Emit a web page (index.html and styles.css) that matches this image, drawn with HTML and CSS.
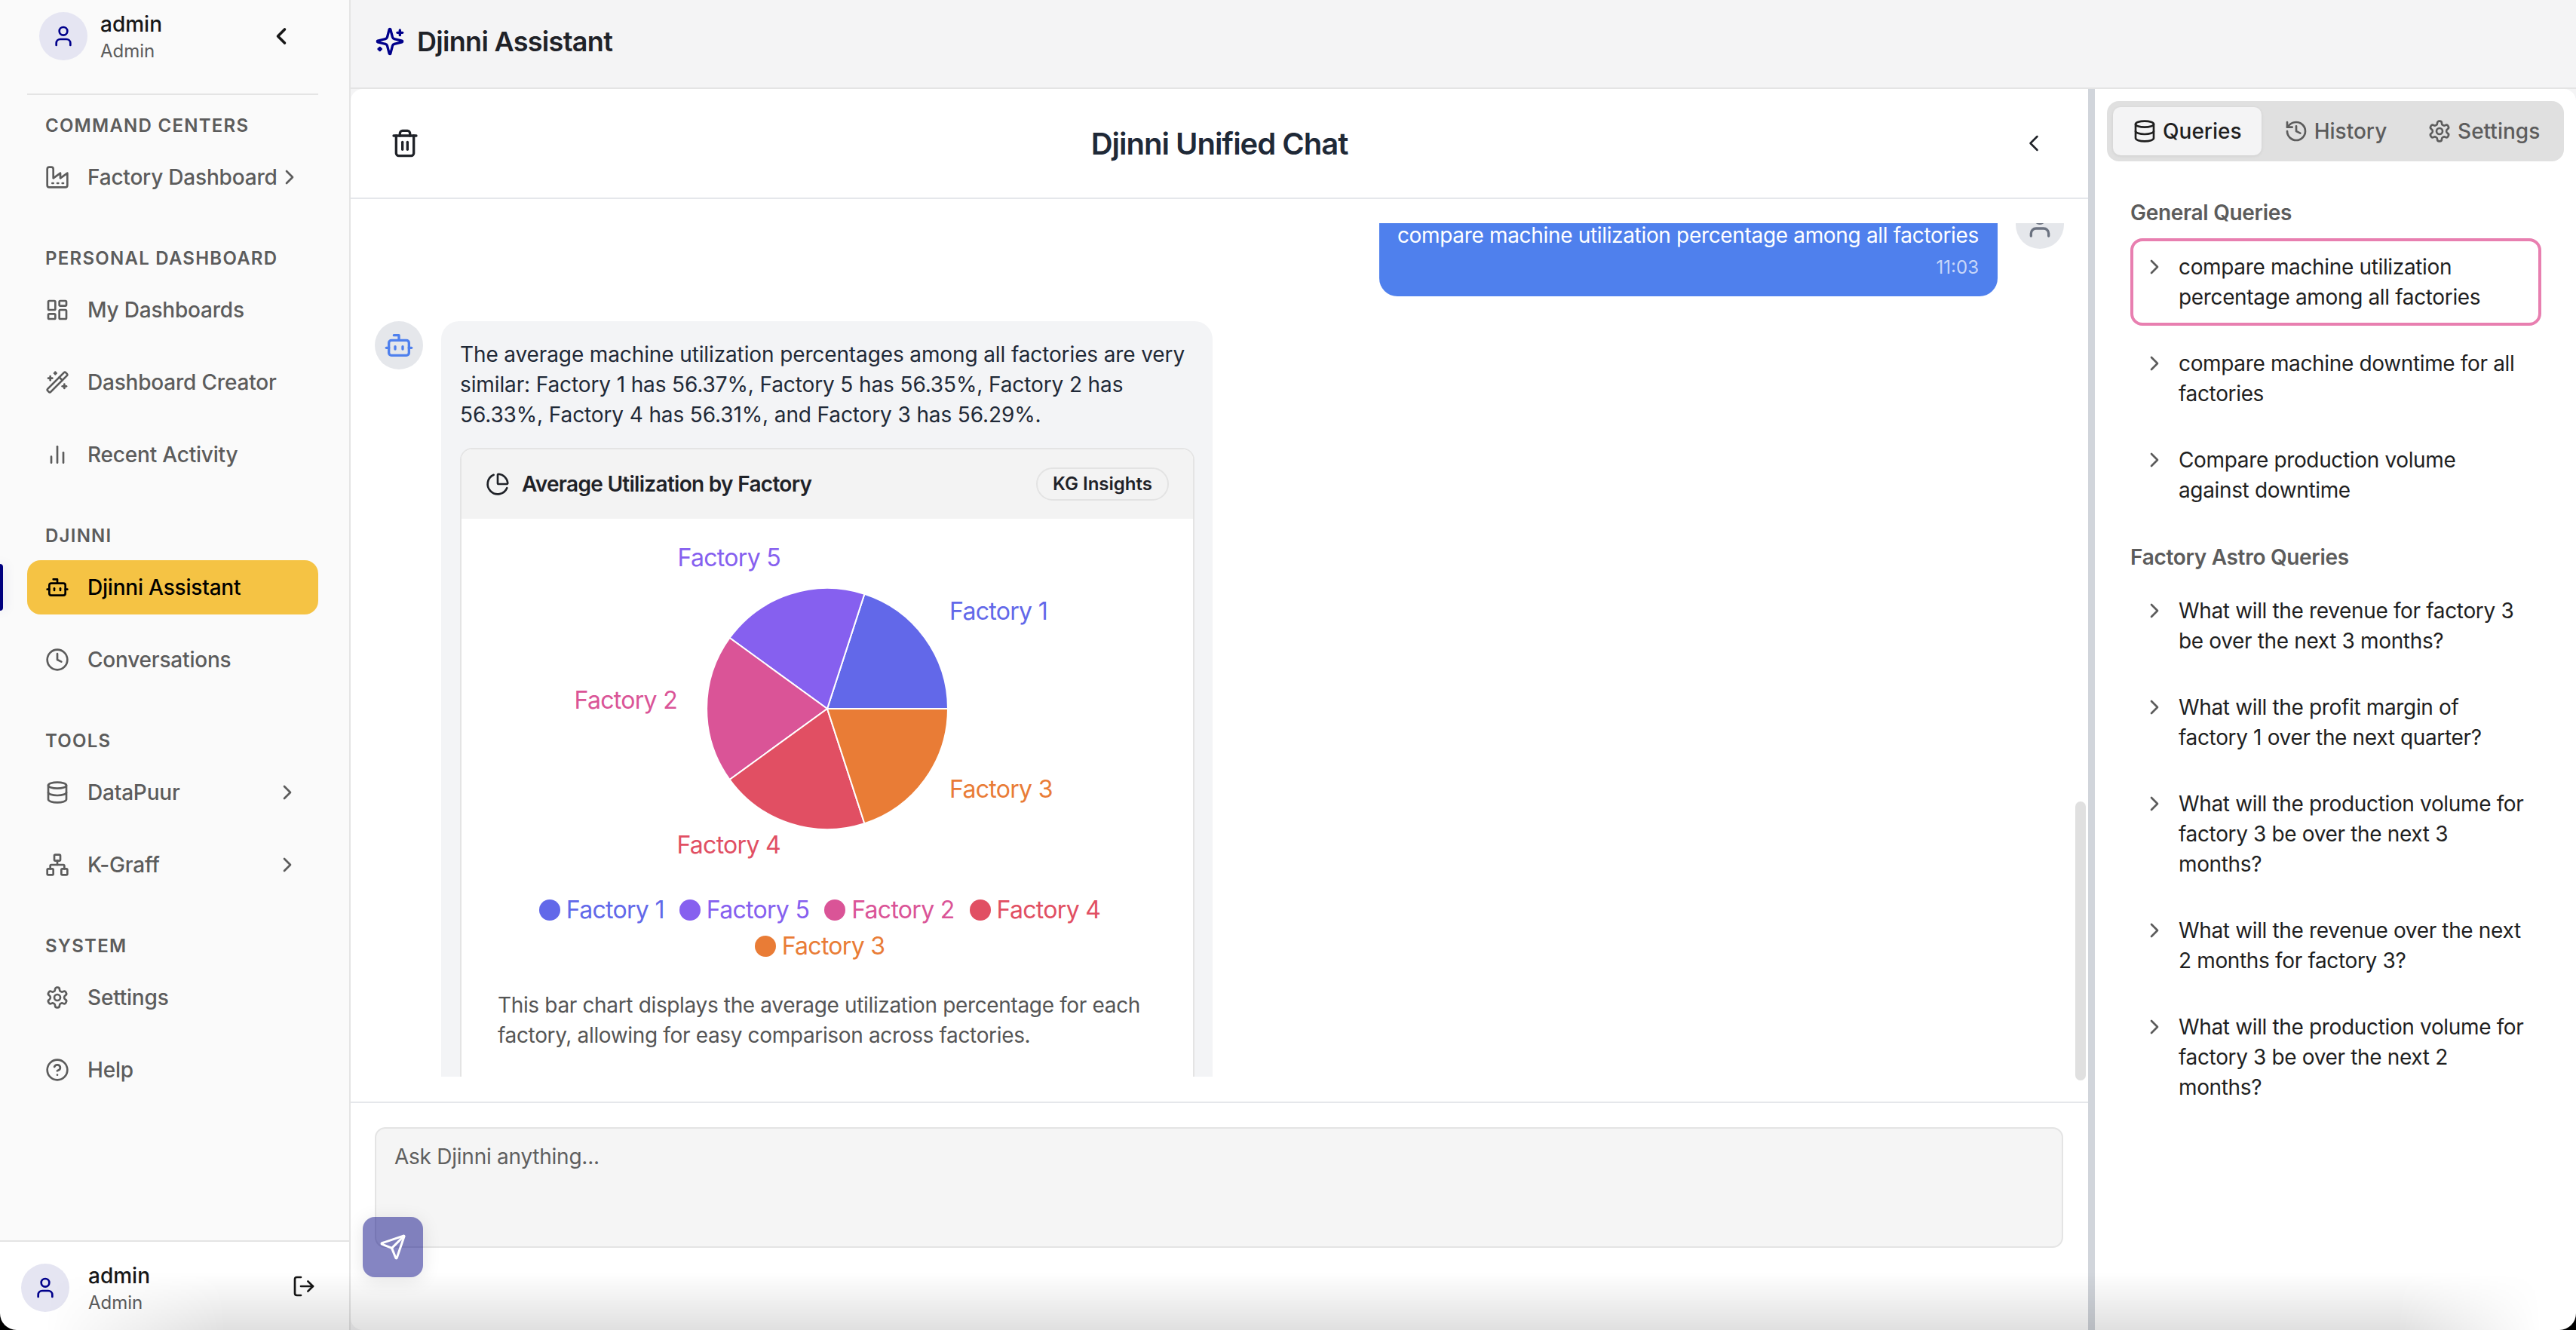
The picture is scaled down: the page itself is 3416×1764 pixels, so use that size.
FILE: index.html
```html
<!DOCTYPE html>
<html lang="en">
<head>
    <meta charset="UTF-8">
    <meta name="viewport" content="width=device-width, initial-scale=1.0">
    <title>Djinni Assistant</title>
    <link rel="stylesheet" href="styles.css">
</head>
<body>
    <!-- icon sprite -->
    <svg class="sprite" xmlns="http://www.w3.org/2000/svg">
        <symbol id="i-user" viewBox="0 0 24 24"><path d="M19 21v-2a4 4 0 0 0-4-4H9a4 4 0 0 0-4 4v2"/><circle cx="12" cy="7" r="4"/></symbol>
        <symbol id="i-left" viewBox="0 0 24 24"><path d="m15 18-6-6 6-6"/></symbol>
        <symbol id="i-right" viewBox="0 0 24 24"><path d="m9 18 6-6-6-6"/></symbol>
        <symbol id="i-factory" viewBox="0 0 24 24"><path d="M2 20a2 2 0 0 0 2 2h16a2 2 0 0 0 2-2V8l-7 5V8l-7 5V4a2 2 0 0 0-2-2H4a2 2 0 0 0-2 2Z"/><path d="M17 18h1"/><path d="M12 18h1"/><path d="M7 18h1"/></symbol>
        <symbol id="i-layout" viewBox="0 0 24 24"><rect width="7" height="9" x="3" y="3" rx="1"/><rect width="7" height="5" x="14" y="3" rx="1"/><rect width="7" height="9" x="14" y="12" rx="1"/><rect width="7" height="5" x="3" y="16" rx="1"/></symbol>
        <symbol id="i-wand" viewBox="0 0 24 24"><path d="m21.64 3.64-1.28-1.28a1.21 1.21 0 0 0-1.72 0L2.36 18.64a1.21 1.21 0 0 0 0 1.72l1.28 1.28a1.2 1.2 0 0 0 1.72 0L21.64 5.36a1.2 1.2 0 0 0 0-1.72"/><path d="m14 7 3 3"/><path d="M5 6v4"/><path d="M19 14v4"/><path d="M10 2v2"/><path d="M7 8H3"/><path d="M21 16h-4"/><path d="M11 3H9"/></symbol>
        <symbol id="i-bars" viewBox="0 0 24 24"><line x1="18" x2="18" y1="20" y2="10"/><line x1="12" x2="12" y1="20" y2="4"/><line x1="6" x2="6" y1="20" y2="14"/></symbol>
        <symbol id="i-bot" viewBox="0 0 24 24"><path d="M12 8V4H8"/><rect width="16" height="12" x="4" y="8" rx="2"/><path d="M2 14h2"/><path d="M20 14h2"/><path d="M15 13v2"/><path d="M9 13v2"/></symbol>
        <symbol id="i-clock" viewBox="0 0 24 24"><circle cx="12" cy="12" r="10"/><polyline points="12 6 12 12 16 14"/></symbol>
        <symbol id="i-database" viewBox="0 0 24 24"><ellipse cx="12" cy="5" rx="9" ry="3"/><path d="M3 5V19A9 3 0 0 0 21 19V5"/><path d="M3 12A9 3 0 0 0 21 12"/></symbol>
        <symbol id="i-network" viewBox="0 0 24 24"><rect x="16" y="16" width="6" height="6" rx="1"/><rect x="2" y="16" width="6" height="6" rx="1"/><rect x="9" y="2" width="6" height="6" rx="1"/><path d="M5 16v-3a1 1 0 0 1 1-1h12a1 1 0 0 1 1 1v3"/><path d="M12 12V8"/></symbol>
        <symbol id="i-settings" viewBox="0 0 24 24"><path d="M12.22 2h-.44a2 2 0 0 0-2 2v.18a2 2 0 0 1-1 1.73l-.43.25a2 2 0 0 1-2 0l-.15-.08a2 2 0 0 0-2.73.73l-.22.38a2 2 0 0 0 .73 2.73l.15.1a2 2 0 0 1 1 1.72v.51a2 2 0 0 1-1 1.74l-.15.09a2 2 0 0 0-.73 2.73l.22.38a2 2 0 0 0 2.73.73l.15-.08a2 2 0 0 1 2 0l.43.25a2 2 0 0 1 1 1.73V20a2 2 0 0 0 2 2h.44a2 2 0 0 0 2-2v-.18a2 2 0 0 1 1-1.73l.43-.25a2 2 0 0 1 2 0l.15.08a2 2 0 0 0 2.73-.73l.22-.39a2 2 0 0 0-.73-2.73l-.15-.08a2 2 0 0 1-1-1.74v-.5a2 2 0 0 1 1-1.74l.15-.09a2 2 0 0 0 .73-2.73l-.22-.38a2 2 0 0 0-2.73-.73l-.15.08a2 2 0 0 1-2 0l-.43-.25a2 2 0 0 1-1-1.73V4a2 2 0 0 0-2-2z"/><circle cx="12" cy="12" r="3"/></symbol>
        <symbol id="i-help" viewBox="0 0 24 24"><circle cx="12" cy="12" r="10"/><path d="M9.09 9a3 3 0 0 1 5.83 1c0 2-3 3-3 3"/><path d="M12 17h.01"/></symbol>
        <symbol id="i-logout" viewBox="0 0 24 24"><path d="M9 21H5a2 2 0 0 1-2-2V5a2 2 0 0 1 2-2h4"/><polyline points="16 17 21 12 16 7"/><line x1="21" x2="9" y1="12" y2="12"/></symbol>
        <symbol id="i-sparkles" viewBox="0 0 24 24"><path d="M9.937 15.5A2 2 0 0 0 8.5 14.063l-6.135-1.582a.5.5 0 0 1 0-.962L8.5 9.936A2 2 0 0 0 9.937 8.5l1.582-6.135a.5.5 0 0 1 .963 0L14.063 8.5A2 2 0 0 0 15.5 9.937l6.135 1.581a.5.5 0 0 1 0 .964L15.5 14.063a2 2 0 0 0-1.437 1.437l-1.582 6.135a.5.5 0 0 1-.963 0z"/><path d="M20 3v4"/><path d="M22 5h-4"/><path d="M4 17v2"/><path d="M5 18H3"/></symbol>
        <symbol id="i-trash" viewBox="0 0 24 24"><path d="M3 6h18"/><path d="M19 6v14c0 1-1 2-2 2H7c-1 0-2-1-2-2V6"/><path d="M8 6V4c0-1 1-2 2-2h4c1 0 2 1 2 2v2"/><line x1="10" x2="10" y1="11" y2="17"/><line x1="14" x2="14" y1="11" y2="17"/></symbol>
        <symbol id="i-pie" viewBox="0 0 24 24"><path d="M21 12c.552 0 1.005-.449.95-.998a10 10 0 0 0-8.953-8.951c-.55-.055-.998.398-.998.95v8a1 1 0 0 0 1 1z"/><path d="M21.21 15.89A10 10 0 1 1 8 2.83"/></symbol>
        <symbol id="i-history" viewBox="0 0 24 24"><path d="M3 12a9 9 0 1 0 9-9 9.75 9.75 0 0 0-6.74 2.74L3 8"/><path d="M3 3v5h5"/><path d="M12 7v5l4 2"/></symbol>
        <symbol id="i-send" viewBox="0 0 24 24"><path d="M14.536 21.686a.5.5 0 0 0 .937-.024l6.5-19a.496.496 0 0 0-.635-.635l-19 6.5a.5.5 0 0 0-.024.937l7.93 3.18a2 2 0 0 1 1.112 1.11z"/><path d="m21.854 2.147-10.94 10.939"/></symbol>
    </svg>

    <div class="app">
        <!-- Sidebar -->
        <aside class="sidebar">
            <div class="side-top">
                <div class="user-chip">
                    <span class="avatar"><svg class="icon"><use href="#i-user"/></svg></span>
                    <div class="user-text"><div class="user-name">admin</div><div class="user-role">Admin</div></div>
                    <svg class="icon icon-collapse"><use href="#i-left"/></svg>
                </div>
            </div>

            <nav class="nav">
                <div class="nav-section">
                    <div class="nav-title">COMMAND CENTERS</div>
                    <a class="nav-item"><svg class="icon"><use href="#i-factory"/></svg><span class="nav-label">Factory Dashboard</span><svg class="icon"><use href="#i-right"/></svg></a>
                </div>
                <div class="nav-section">
                    <div class="nav-title">PERSONAL DASHBOARD</div>
                    <a class="nav-item"><svg class="icon"><use href="#i-layout"/></svg><span class="nav-label">My Dashboards</span></a>
                    <a class="nav-item"><svg class="icon"><use href="#i-wand"/></svg><span class="nav-label">Dashboard Creator</span></a>
                    <a class="nav-item"><svg class="icon"><use href="#i-bars"/></svg><span class="nav-label">Recent Activity</span></a>
                </div>
                <div class="nav-section">
                    <div class="nav-title">DJINNI</div>
                    <a class="nav-item active"><svg class="icon"><use href="#i-bot"/></svg><span class="nav-label">Djinni Assistant</span></a>
                    <a class="nav-item"><svg class="icon"><use href="#i-clock"/></svg><span class="nav-label">Conversations</span></a>
                </div>
                <div class="nav-section">
                    <div class="nav-title">TOOLS</div>
                    <a class="nav-item"><svg class="icon"><use href="#i-database"/></svg><span class="nav-label">DataPuur</span><svg class="icon"><use href="#i-right"/></svg></a>
                    <a class="nav-item"><svg class="icon"><use href="#i-network"/></svg><span class="nav-label">K-Graff</span><svg class="icon"><use href="#i-right"/></svg></a>
                </div>
                <div class="nav-section">
                    <div class="nav-title">SYSTEM</div>
                    <a class="nav-item"><svg class="icon"><use href="#i-settings"/></svg><span class="nav-label">Settings</span></a>
                    <a class="nav-item"><svg class="icon"><use href="#i-help"/></svg><span class="nav-label">Help</span></a>
                </div>
            </nav>

            <div class="side-bottom">
                <div class="user-chip">
                    <span class="avatar"><svg class="icon"><use href="#i-user"/></svg></span>
                    <div class="user-text"><div class="user-name">admin</div><div class="user-role">Admin</div></div>
                    <svg class="icon icon-logout"><use href="#i-logout"/></svg>
                </div>
            </div>
        </aside>

        <main class="main">
            <header class="topbar">
                <svg class="icon icon-spark"><use href="#i-sparkles"/></svg>
                <h1 class="topbar-title">Djinni Assistant</h1>
            </header>

            <div class="content">
                <!-- Chat -->
                <section class="chat">
                    <div class="chat-head">
                        <button class="icon-btn"><svg class="icon icon-40"><use href="#i-trash"/></svg></button>
                        <h2 class="chat-title">Djinni Unified Chat</h2>
                        <button class="icon-btn"><svg class="icon icon-36 thin"><use href="#i-left"/></svg></button>
                    </div>

                    <div class="messages">
                        <div class="msg msg-user">
                            <div class="bubble-user">
                                <div class="user-text-line">compare machine utilization percentage among all factories</div>
                                <div class="msg-time">11:03</div>
                            </div>
                            <span class="msg-avatar user"><svg class="icon icon-40"><use href="#i-user"/></svg></span>
                        </div>

                        <div class="msg">
                            <span class="msg-avatar bot"><svg class="icon icon-40"><use href="#i-bot"/></svg></span>
                            <div class="bubble-bot">
                                <p class="bot-text">The average machine utilization percentages among all factories are very similar: Factory 1 has 56.37%, Factory 5 has 56.35%, Factory 2 has 56.33%, Factory 4 has 56.31%, and Factory 3 has 56.29%.</p>
                                <div class="chart-card">
                                    <div class="chart-head">
                                        <svg class="icon"><use href="#i-pie"/></svg>
                                        <span class="chart-title">Average Utilization by Factory</span>
                                        <span class="badge">KG Insights</span>
                                    </div>
                                    <div class="chart-body">
                                        <svg class="pie" viewBox="0 0 970 495" width="970" height="495">
                                            <g transform="translate(485 252)" stroke="#fff" stroke-width="2">
                                                <path fill="#6268e9" d="M0 0L160 0A160 160 0 0 0 49.4 -152.2Z"/>
                                                <path fill="#8660ef" d="M0 0L49.4 -152.2A160 160 0 0 0 -129.4 -94Z"/>
                                                <path fill="#da5497" d="M0 0L-129.4 -94A160 160 0 0 0 -129.4 94Z"/>
                                                <path fill="#e14f63" d="M0 0L-129.4 94A160 160 0 0 0 49.4 152.2Z"/>
                                                <path fill="#e97c36" d="M0 0L49.4 152.2A160 160 0 0 0 160 0Z"/>
                                            </g>
                                            <text class="pie-label f1" x="647" y="122">Factory 1</text>
                                            <text class="pie-label f5" x="423" y="51" text-anchor="end">Factory 5</text>
                                            <text class="pie-label f2" x="286" y="240" text-anchor="end">Factory 2</text>
                                            <text class="pie-label f4" x="423" y="432" text-anchor="end">Factory 4</text>
                                            <text class="pie-label f3" x="647" y="358">Factory 3</text>
                                        </svg>
                                        <ul class="legend">
                                            <li class="f1"><span class="dot"></span>Factory 1</li>
                                            <li class="f5"><span class="dot"></span>Factory 5</li>
                                            <li class="f2"><span class="dot"></span>Factory 2</li>
                                            <li class="f4"><span class="dot"></span>Factory 4</li>
                                            <li class="f3"><span class="dot"></span>Factory 3</li>
                                        </ul>
                                        <p class="chart-desc">This bar chart displays the average utilization percentage for each factory, allowing for easy comparison across factories.</p>
                                    </div>
                                </div>
                            </div>
                        </div>
                    </div>
                    <div class="scroll-thumb"></div>

                    <div class="composer">
                        <div class="composer-box">Ask Djinni anything...</div>
                        <button class="send-btn"><svg class="icon icon-36"><use href="#i-send"/></svg></button>
                    </div>
                </section>

                <div class="split"></div>

                <!-- Right panel -->
                <section class="panel">
                    <div class="tabs">
                        <div class="tab active"><svg class="icon"><use href="#i-database"/></svg>Queries</div>
                        <div class="tab"><svg class="icon"><use href="#i-history"/></svg>History</div>
                        <div class="tab"><svg class="icon"><use href="#i-settings"/></svg>Settings</div>
                    </div>

                    <h3 class="query-title">General Queries</h3>
                    <div class="query-list">
                        <div class="query selected"><svg class="icon"><use href="#i-right"/></svg><span>compare machine utilization percentage among all factories</span></div>
                        <div class="query"><svg class="icon"><use href="#i-right"/></svg><span>compare machine downtime for all factories</span></div>
                        <div class="query"><svg class="icon"><use href="#i-right"/></svg><span>Compare production volume against downtime</span></div>
                    </div>

                    <h3 class="query-title">Factory Astro Queries</h3>
                    <div class="query-list">
                        <div class="query"><svg class="icon"><use href="#i-right"/></svg><span>What will the revenue for factory 3 be over the next 3 months?</span></div>
                        <div class="query"><svg class="icon"><use href="#i-right"/></svg><span>What will the profit margin of factory 1 over the next quarter?</span></div>
                        <div class="query"><svg class="icon"><use href="#i-right"/></svg><span>What will the production volume for factory 3 be over the next 3 months?</span></div>
                        <div class="query"><svg class="icon"><use href="#i-right"/></svg><span>What will the revenue over the next 2 months for factory 3?</span></div>
                        <div class="query"><svg class="icon"><use href="#i-right"/></svg><span>What will the production volume for factory 3 be over the next 2 months?</span></div>
                    </div>
                </section>
            </div>
        </main>
    </div>

    <div class="bottom-fade"></div>
    <div class="window-edge"></div>
</body>
</html>
```

FILE: styles.css
```css
* {
    box-sizing: border-box;
}
html, body {
    margin: 0;
    height: 100%;
    overflow: hidden;
}
body {
    font-family: Inter, "Noto Sans", sans-serif;
    font-size: 28px;
    color: #1f1f1f;
    background: #fff;
}
p, h1, h2, h3, ul {
    margin: 0;
    padding: 0;
}
.sprite {
    display: none;
}
.icon {
    width: 32px;
    height: 32px;
    flex: none;
    fill: none;
    stroke: currentColor;
    stroke-width: 2;
    stroke-linecap: round;
    stroke-linejoin: round;
}
.icon-36 {
    width: 36px;
    height: 36px;
}
.icon-40 {
    width: 40px;
    height: 40px;
}
.thin {
    stroke-width: 1.7;
}
.app {
    display: flex;
    height: 1764px;
}

/* sidebar */
.sidebar {
    width: 465px;
    flex: none;
    display: flex;
    flex-direction: column;
    background: #fafafa;
    border-right: 2px solid #e4e4e4;
    position: relative;
}
.side-top {
    height: 126px;
    margin: 0 41px 0 36px;
    padding: 14px 0 0 16px;
    border-bottom: 2px solid #e4e4e4;
}
.user-chip {
    display: flex;
    align-items: flex-start;
}
.avatar {
    width: 64px;
    height: 64px;
    margin-top: 2px;
    margin-right: 17px;
    flex: none;
    display: flex;
    align-items: center;
    justify-content: center;
    border-radius: 50%;
    background: #e5e5f2;
    color: #00008b;
}
.user-text {
    flex: 1;
}
.user-name {
    font-weight: 500;
    line-height: 36px;
    color: #171717;
}
.user-role {
    font-size: 24px;
    line-height: 36px;
    color: #5c5c5c;
}
.icon-collapse {
    width: 36px;
    height: 36px;
    margin-top: 16px;
    margin-right: 31px;
    stroke-width: 2.4;
    color: #171717;
}
.nav {
    flex: 1;
    display: flex;
    flex-direction: column;
    gap: 56px;
    padding-top: 25px;
}
.nav-section {
    display: flex;
    flex-direction: column;
    gap: 24px;
    margin: 0 41px 0 36px;
}
.nav-title {
    margin: 0 0 -8px 24px;
    font-size: 24px;
    font-weight: 600;
    line-height: 32px;
    letter-spacing: 0.052em;
    color: #5c5c5c;
}
.nav-item {
    height: 72px;
    display: flex;
    align-items: center;
    gap: 24px;
    padding: 0 25px 0 24px;
    border-radius: 18px;
    font-weight: 500;
    letter-spacing: -0.2px;
    color: #5c5c5c;
}
.nav-label {
    flex: 1;
    white-space: nowrap;
}
.nav-item .nav-label + .icon {
    margin-left: -24px;
}
.nav-item.active {
    position: relative;
    background: #f5c344;
    color: #000;
}
/* little marker on the window edge */
.nav-item.active::before {
    content: "";
    position: absolute;
    left: -36px;
    top: 5px;
    width: 4px;
    height: 62px;
    border-radius: 0 4px 4px 0;
    background: #00007f;
    box-shadow: 0 0 16px rgba(0, 0, 127, 0.2);
}
.side-bottom {
    height: 119px;
    padding: 27px 0 0 28px;
    background: #fff;
    border-top: 2px solid #e4e4e4;
}
.side-bottom .avatar {
    margin-right: 25px;
}
.icon-logout {
    margin-top: 16px;
    margin-right: 44px;
    color: #171717;
}

/* main */
.main {
    flex: 1;
    display: flex;
    flex-direction: column;
    min-width: 0;
    background: #f4f4f5;
}
.topbar {
    height: 118px;
    flex: none;
    display: flex;
    align-items: center;
    gap: 16px;
    padding: 0 0 6px 32px;
    border-bottom: 2px solid #e4e4e4;
}
.icon-spark {
    width: 40px;
    height: 40px;
    color: #00008b;
}
.topbar-title {
    font-size: 36px;
    font-weight: 600;
    letter-spacing: -0.7px;
    color: #1f2228;
}
.content {
    flex: 1;
    display: flex;
    min-height: 0;
    overflow: hidden;
    border-radius: 16px;
    background: #fff;
}

/* chat */
.chat {
    flex: 1;
    min-width: 0;
    display: flex;
    flex-direction: column;
    position: relative;
}
.chat-head {
    height: 146px;
    flex: none;
    display: flex;
    align-items: center;
    justify-content: space-between;
    padding: 0 32px;
    border-bottom: 2px solid #e5e7eb;
}
.icon-btn {
    width: 80px;
    height: 80px;
    display: flex;
    align-items: center;
    justify-content: center;
    padding: 0;
    border: 0;
    background: none;
    color: #1f2228;
}
.chat-title {
    font-size: 40px;
    font-weight: 600;
    letter-spacing: -1px;
    color: #1f2937;
}
.messages {
    height: 1132px;
    flex: none;
    margin: 32px 0 33px;
    overflow: hidden;
    padding: 0 32px;
}
.msg {
    display: flex;
    align-items: flex-start;
    gap: 24px;
    margin-bottom: 33px;
}
/* first row is scrolled a bit out of view */
.msg-user {
    justify-content: flex-end;
    margin-top: -30px;
}
.msg-avatar {
    width: 64px;
    height: 64px;
    flex: none;
    display: flex;
    align-items: center;
    justify-content: center;
    border-radius: 50%;
    background: #e5e7eb;
}
.msg-avatar.user {
    color: #6b7280;
}
.msg-avatar.bot {
    color: #4f80ed;
}
.bubble-user {
    width: 820px;
    padding: 26px 25px 22px 15px;
    border-radius: 24px;
    background: #4f80ed;
    color: #fff;
    line-height: 40px;
    text-align: right;
}
.user-text-line {
    letter-spacing: -0.33px;
    white-space: nowrap;
}
.msg-time {
    margin-top: 7px;
    font-size: 24px;
    line-height: 32px;
    color: rgba(255, 255, 255, 0.7);
}
.bubble-bot {
    width: 1023px;
    padding: 24px 24px 0 25px;
    border-radius: 24px;
    background: #f3f4f6;
}
.bot-text {
    line-height: 40px;
    letter-spacing: -0.12px;
    color: #1f2937;
}
.chart-card {
    margin-top: 24px;
    border: 2px solid #e4e4e4;
    border-radius: 16px;
    overflow: hidden;
    background: #fff;
}
.chart-head {
    height: 92px;
    display: flex;
    align-items: center;
    gap: 16px;
    padding: 0 32px;
    background: #f3f3f3;
    color: #1f2228;
}
.chart-title {
    flex: 1;
    font-weight: 600;
    letter-spacing: -0.7px;
}
.badge {
    padding: 0 20px;
    border: 2px solid #e3e3e3;
    border-radius: 22px;
    font-size: 24px;
    font-weight: 600;
    line-height: 40px;
}
.chart-body {
    padding-bottom: 60px;
}
.pie {
    display: block;
}
.pie-label {
    font-size: 32px;
    letter-spacing: -0.7px;
    dominant-baseline: central;
    fill: currentColor;
}
.f1 { color: #6268e9; }
.f5 { color: #8660ef; }
.f2 { color: #da5497; }
.f4 { color: #e14f63; }
.f3 { color: #e97c36; }
.legend {
    display: flex;
    flex-wrap: wrap;
    justify-content: center;
    padding: 0 60px;
    list-style: none;
}
.legend li {
    display: flex;
    align-items: center;
    gap: 8px;
    margin-right: 20px;
    font-size: 32px;
    line-height: 48px;
    letter-spacing: -0.7px;
}
.dot {
    width: 28px;
    height: 28px;
    border-radius: 50%;
    background: currentColor;
}
.chart-desc {
    margin-top: 34px;
    padding: 0 48px;
    line-height: 40px;
    letter-spacing: -0.35px;
    color: #555;
}
.scroll-thumb {
    position: absolute;
    right: 3px;
    top: 945px;
    width: 14px;
    height: 370px;
    border-radius: 7px;
    background: #e0e0e0;
}
.composer {
    flex: 1;
    padding: 32px 33px 0 32px;
    border-top: 2px solid #e5e7eb;
    position: relative;
}
.composer-box {
    height: 160px;
    padding: 17px 24px;
    border: 2px solid #e4e4e4;
    border-radius: 14px;
    background: #f5f5f5;
    line-height: 40px;
    letter-spacing: -0.25px;
    color: #5f5f5f;
}
.send-btn {
    position: absolute;
    left: 16px;
    top: 151px;
    width: 80px;
    height: 80px;
    display: flex;
    align-items: center;
    justify-content: center;
    padding: 0;
    border: 0;
    border-radius: 16px;
    background: rgba(0, 0, 127, 0.48);
    color: #fff;
    box-shadow: 0 4px 24px rgba(0, 0, 0, 0.1);
}
.split {
    width: 9px;
    flex: none;
    background: #d1d5db;
}

/* right panel */
.panel {
    width: 638px;
    flex: none;
    padding: 16px 16px 0 47px;
}
.tabs {
    display: grid;
    grid-template-columns: repeat(3, 1fr);
    width: 606px;
    height: 80px;
    margin-left: -31px;
    padding: 8px;
    border-radius: 16px;
    background: #e0e0e0;
}
.tab {
    display: flex;
    align-items: center;
    justify-content: center;
    gap: 8px;
    border-radius: 10px;
    font-weight: 500;
    color: #5c5c5c;
}
.tab.active {
    background: #f4f4f5;
    color: #1f1f1f;
    box-shadow: 0 1px 4px rgba(0, 0, 0, 0.08);
}
.query-title {
    margin-top: 48px;
    margin-bottom: 14px;
    font-size: 28px;
    font-weight: 600;
    line-height: 40px;
    letter-spacing: -0.3px;
    color: #5c5c5c;
}
.query-list + .query-title {
    margin-top: 31px;
    margin-bottom: 13px;
}
.query-list {
    display: flex;
    flex-direction: column;
    gap: 12px;
    width: 545px;
}
.query {
    display: flex;
    align-items: flex-start;
    gap: 16px;
    padding: 14px 12px;
    border: 4px solid transparent;
    border-radius: 16px;
    line-height: 40px;
    letter-spacing: -0.35px;
}
.query .icon {
    margin-top: 4px;
    color: #5c5c5c;
}
.query.selected {
    border-color: #e87fb0;
}

/* soft fade and rounded corners of the captured window */
.bottom-fade {
    position: fixed;
    left: 0;
    right: 0;
    bottom: 0;
    height: 76px;
    background: linear-gradient(rgba(0, 0, 0, 0), rgba(0, 0, 0, 0.12));
    -webkit-mask-image: linear-gradient(90deg, transparent 60px, #000 300px, #000 3180px, transparent 3370px);
    mask-image: linear-gradient(90deg, transparent 60px, #000 300px, #000 3180px, transparent 3370px);
    pointer-events: none;
}
.window-edge {
    position: fixed;
    inset: 0;
    border-radius: 0 0 22px 22px;
    box-shadow: 0 0 0 40px #000;
    pointer-events: none;
}
```
